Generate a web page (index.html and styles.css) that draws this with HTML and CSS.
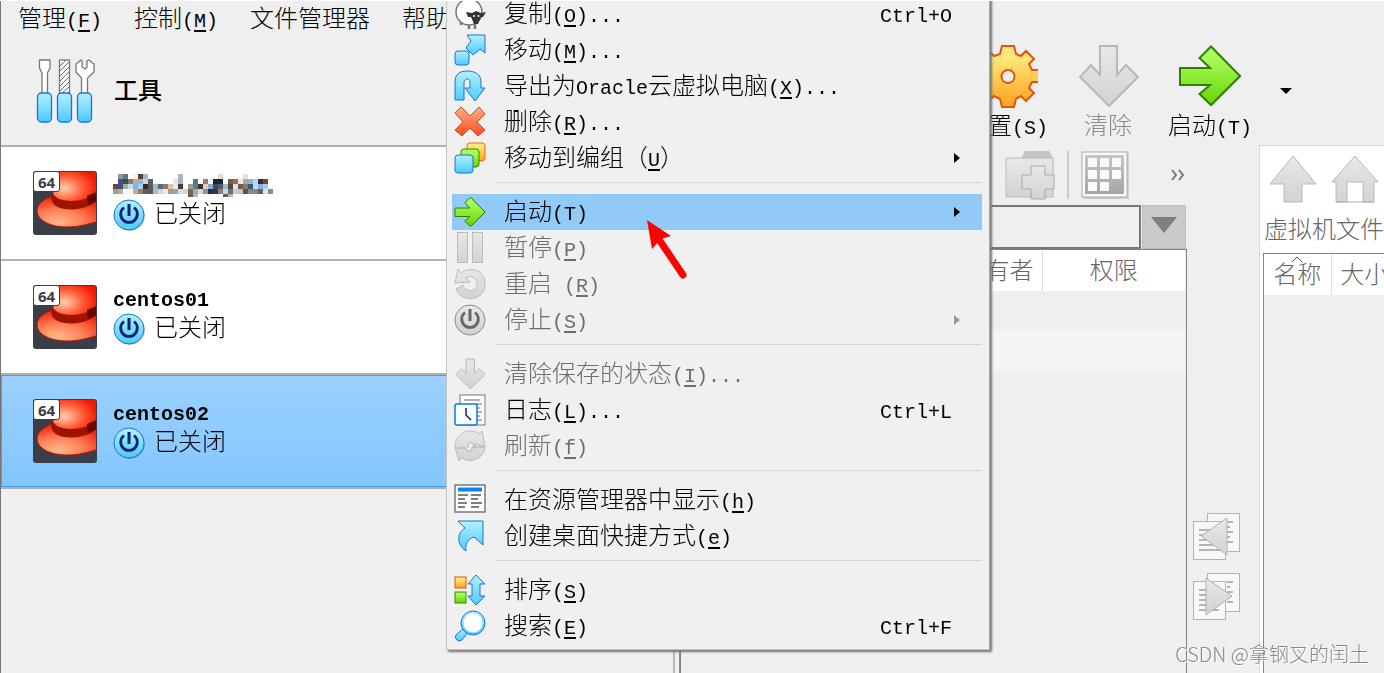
FILE: index.html
```html
<!DOCTYPE html>
<html lang="zh-CN">
<head>
    <meta charset="UTF-8">
    <meta name="viewport" content="width=device-width, initial-scale=1.0">
    <title>VirtualBox</title>
    <link rel="stylesheet" href="styles.css">
</head>
<body>
    <!-- Shared gradients and symbols -->
    <svg class="defs" width="0" height="0" aria-hidden="true">
        <defs>
            <linearGradient id="blue" x1="0" y1="0" x2="0" y2="1"><stop offset="0" stop-color="#b4f0ff"/><stop offset="1" stop-color="#4ccaff"/></linearGradient>
            <linearGradient id="green" x1="0" y1="0" x2="0" y2="1"><stop offset="0.2" stop-color="#a8fb5a"/><stop offset="1" stop-color="#66d400"/></linearGradient>
            <linearGradient id="orange" x1="0" y1="0" x2="0" y2="1"><stop offset="0.2" stop-color="#ffe67a"/><stop offset="1" stop-color="#ffa01e"/></linearGradient>
            <linearGradient id="red" x1="0" y1="0" x2="0" y2="1"><stop offset="0" stop-color="#ffb08a"/><stop offset="1" stop-color="#ff4a20"/></linearGradient>
            <linearGradient id="gray" x1="0" y1="0" x2="0" y2="1"><stop offset="0" stop-color="#e8e8e8"/><stop offset="1" stop-color="#d2d2d2"/></linearGradient>
            <linearGradient id="grid" x1="0" y1="0" x2="0" y2="1"><stop offset="0" stop-color="#c6c6c6"/><stop offset="1" stop-color="#a6a6a6"/></linearGradient>
            <radialGradient id="crown" cx="0.25" cy="0.6" r="0.9"><stop offset="0" stop-color="#ffd0b0"/><stop offset="0.45" stop-color="#ff5c34"/><stop offset="0.8" stop-color="#f01800"/></radialGradient>
            <radialGradient id="brim" cx="0.35" cy="0.85" r="0.8"><stop offset="0" stop-color="#ffb88c"/><stop offset="0.5" stop-color="#ff8058"/><stop offset="1" stop-color="#f02810"/></radialGradient>
            <clipPath id="tile"><rect x="1" y="1" width="62" height="62" rx="2"/></clipPath>
        </defs>
        <symbol id="hat" viewBox="0 0 64 64">
            <rect width="64" height="64" rx="3" fill="#3a3e49"/>
            <g clip-path="url(#tile)">
                <path d="M19 25C10 28 4 34 4 39C4 50 18 56 34 56C46 56 56 53 66 50V26Z" fill="url(#brim)" stroke="#b81400" stroke-width="1"/>
                <path d="M27 -1C26 10 23 16 20 23C24 32 48 32 66 22V-1Z" fill="url(#crown)"/>
                <path d="M19 21C22 28 30 30 39 30C50 30 58 26 66 20V29C56 36 48 38.500 38 38.500C27 38.500 19 35 18 27Z" fill="#9e1400"/>
                <path d="M54 25L66 20V29L55 34Z" fill="#650600"/>
            </g>
        </symbol>
        <symbol id="power" viewBox="0 0 32 32">
            <circle cx="17" cy="17" r="15" fill="#0003"/>
            <circle cx="16" cy="16" r="15" fill="url(#blue)" stroke="#1a72d0" stroke-width="1"/>
            <path d="M11 8.500A8.300 8.300 0 1 0 21 8.500" fill="none" stroke="#04256e" stroke-width="2.800"/>
            <path d="M16 5V17" stroke="#04256e" stroke-width="3"/>
        </symbol>
        <symbol id="arrow-right" viewBox="0 0 64 64">
            <path d="M3 25H32L22 14L34 2.500L64 33L34 62L22 50L32 42H3Z" fill="#0002"/>
            <path d="M2 24H32L21.500 14L33 2.500L62 32L33 61L21.500 50L32 41H2Z" fill="url(#green)" stroke="#2f8000" stroke-width="2"/>
        </symbol>
        <symbol id="arrow-down" viewBox="0 0 64 64">
            <path d="M24 2H41V31L50 21L62 33L33 62L4 33L15 21L24 31Z" fill="url(#gray)" stroke="#b8b8b8" stroke-width="2"/>
        </symbol>
    </svg>

    <nav class="menubar">
        <button type="button">管理<span class="en">(<u>F</u>)</span></button>
        <button type="button">控制<span class="en">(<u>M</u>)</span></button>
        <button type="button">文件管理器</button>
        <button type="button">帮助</button>
    </nav>

    <div class="window">
        <aside class="machines">
            <div class="tools-row">
                <svg width="64" height="68" viewBox="0 0 64 68">
                    <g fill="#fff" stroke="#777" stroke-width="1.300">
                        <path d="M6.500 2H17V10L14.500 15V36H9V15L6.500 10Z"/>
                        <rect x="26.500" y="2" width="10" height="34"/>
                        <path d="M48 2L43 6V14L48.500 20V36H54.500V20L61 14V6L56 2L54 3V9L52 11L49 9V3Z"/>
                    </g>
                    <path d="M27 8L33 2M27 13L36 4M27 18L36 9M27 23L36 14M27 28L36 19M27 33L36 24M28 36L36 29M33 36L36 34" stroke="#666" stroke-width="1"/>
                    <g fill="url(#blue)" stroke="#1a72d0" stroke-width="1.300">
                        <rect x="4.500" y="35" width="14" height="29" rx="4"/>
                        <rect x="24.500" y="35" width="14" height="29" rx="4"/>
                        <rect x="44.500" y="35" width="14" height="29" rx="4"/>
                    </g>
                </svg>
                <strong>工具</strong>
            </div>
            <ul class="machine-list">
                <li class="machine">
                    <div class="os"><svg width="64" height="64"><use href="#hat"/></svg><span class="bits">64</span></div>
                    <div class="info">
                        <canvas id="hiddenName" width="160" height="26"></canvas>
                        <div class="state"><svg width="32" height="32"><use href="#power"/></svg><span>已关闭</span></div>
                    </div>
                </li>
                <li class="machine">
                    <div class="os"><svg width="64" height="64"><use href="#hat"/></svg><span class="bits">64</span></div>
                    <div class="info">
                        <div class="name en">centos01</div>
                        <div class="state"><svg width="32" height="32"><use href="#power"/></svg><span>已关闭</span></div>
                    </div>
                </li>
                <li class="machine selected">
                    <div class="os"><svg width="64" height="64"><use href="#hat"/></svg><span class="bits">64</span></div>
                    <div class="info">
                        <div class="name en">centos02</div>
                        <div class="state"><svg width="32" height="32"><use href="#power"/></svg><span>已关闭</span></div>
                    </div>
                </li>
            </ul>
        </aside>

        <main class="detail">
            <div class="toolbar">
                <button type="button" class="tool">
                    <svg width="64" height="64" viewBox="0 0 64 64">
                        <path fill-rule="evenodd" d="M28 2H40L42 10L47 12L52 7L60 15L55 20L58 26H65V38H58L55 44L60 49L52 57L47 52L42 55L40 63H28L26 55L20 52L15 57L8 49L13 44L10 38H3V26H10L13 20L8 15L15 7L20 12L26 10ZM34 26A6.500 6.500 0 1 0 34 39A6.500 6.500 0 1 0 34 26Z" fill="url(#orange)" stroke="#e0560c" stroke-width="2"/>
                    </svg>
                    <span>设置<span class="en">(S)</span></span>
                </button>
                <button type="button" class="tool" disabled>
                    <svg width="64" height="64"><use href="#arrow-down"/></svg>
                    <span>清除</span>
                </button>
                <button type="button" class="tool">
                    <svg width="64" height="64"><use href="#arrow-right"/></svg>
                    <span>启动<span class="en">(T)</span></span>
                </button>
                <button type="button" class="more" aria-label="more">
                    <svg width="12" height="6" viewBox="0 0 12 6"><path d="M0 0H12L6 6Z"/></svg>
                </button>
            </div>

            <div class="files">
                <section class="host">
                    <div class="file-tools">
                        <svg width="50" height="52" viewBox="0 0 50 52">
                            <path d="M17 10L21 2H45L49 10V48H2V10Z" fill="#0001"/>
                            <path d="M16 10L20 2H44L48 10Z" fill="#c4c4c4"/>
                            <rect x="1" y="9" width="47" height="39" fill="url(#gray)" stroke="#bbb"/>
                            <path d="M26 17H40V26H49V40H40V50H26V40H17V26H26Z" fill="url(#gray)" stroke="#aaa"/>
                        </svg>
                        <span class="divider"></span>
                        <svg width="48" height="48" viewBox="0 0 48 48">
                            <rect x="2" y="2" width="46" height="46" fill="#0002"/>
                            <rect x="1" y="1" width="45" height="45" fill="#f9f9f9" stroke="#aaa"/>
                            <rect x="4" y="4" width="39" height="39" fill="url(#grid)"/>
                            <g fill="#fafafa">
                                <rect x="7" y="7" width="9" height="9"/><rect x="19" y="7" width="9" height="9"/><rect x="31" y="7" width="9" height="9"/>
                                <rect x="7" y="19" width="9" height="9"/><rect x="19" y="19" width="9" height="9"/><rect x="31" y="19" width="9" height="9"/>
                                <rect x="7" y="31" width="9" height="9"/><rect x="19" y="31" width="9" height="9"/>
                            </g>
                        </svg>
                        <button type="button" class="expand" aria-label="expand">
                            <svg width="14" height="12" viewBox="0 0 14 12"><path d="M1 1L5 6L1 11M8 1L12 6L8 11" fill="none" stroke="#777" stroke-width="2"/></svg>
                        </button>
                    </div>
                    <div class="path">
                        <input type="text" aria-label="path" disabled>
                        <button type="button" aria-label="history" disabled>
                            <svg width="26" height="16" viewBox="0 0 26 16"><path d="M0 0H26L13 16Z" fill="#7f7f7f"/></svg>
                        </button>
                    </div>
                    <div class="list">
                        <table>
                            <thead><tr><th class="owner">有者</th><th>权限</th></tr></thead>
                            <tbody>
                                <tr><td></td><td></td></tr>
                                <tr class="alt"><td></td><td></td></tr>
                            </tbody>
                        </table>
                    </div>
                </section>

                <div class="transfer">
                    <button type="button" aria-label="to host" disabled>
                        <svg width="48" height="48" viewBox="0 0 48 48">
                            <g fill="#f8f8f8" stroke="#b4b4b4"><rect x="14.500" y="0.500" width="32" height="38"/><rect x="0.500" y="8.500" width="32" height="38"/></g>
                            <path d="M6 17H30M6 22H30M6 27H30M6 32H30M6 37H30M34 9H40M34 14H37M34 19H40M34 24H37M34 29H40" stroke="#b4b4b4" stroke-width="2"/>
                            <path d="M34 5V42L8 23Z" fill="url(#gray)" stroke="#b0b0b0"/>
                        </svg>
                    </button>
                    <button type="button" aria-label="to guest" disabled>
                        <svg width="48" height="48" viewBox="0 0 48 48">
                            <g fill="#f8f8f8" stroke="#b4b4b4"><rect x="14.500" y="0.500" width="32" height="38"/><rect x="0.500" y="8.500" width="32" height="38"/></g>
                            <path d="M6 17H26M6 22H26M6 27H26M6 32H26M6 37H26M34 9H40M34 14H37M34 19H40M34 24H37M34 29H40" stroke="#b4b4b4" stroke-width="2"/>
                            <path d="M13 5V42L39 23Z" fill="url(#gray)" stroke="#b0b0b0"/>
                        </svg>
                    </button>
                </div>

                <section class="guest">
                    <div class="guest-tools">
                        <svg width="48" height="50" viewBox="0 0 48 50"><path d="M24 1L47 29H33V47H15V29H1Z" fill="url(#gray)" stroke="#b8b8b8"/></svg>
                        <svg width="48" height="50" viewBox="0 0 48 50"><path d="M24 1L47 27H43V47H32V27H16V47H5V27H1Z" fill="url(#gray)" stroke="#b8b8b8"/><path d="M5 47H43" stroke="#b0b0b0"/></svg>
                    </div>
                    <h2>虚拟机文件</h2>
                    <div class="guest-list">
                        <table>
                            <thead><tr>
                                <th class="sorted">名称<svg width="12" height="6" viewBox="0 0 12 6"><path d="M1 6L6 1L11 6" fill="none" stroke="#555"/></svg></th>
                                <th>大小</th>
                            </tr></thead>
                        </table>
                    </div>
                </section>
            </div>
        </main>
    </div>

    <!-- Machine context menu -->
    <div class="context-menu">
        <button type="button" class="item">
            <svg width="32" height="32" viewBox="0 0 32 32">
                <path d="M7 22V27M15 25V31M21 25V31" stroke="#777" stroke-width="2.500"/>
                <circle cx="15" cy="14" r="13" fill="#fff" stroke="#777" stroke-width="1.500"/>
                <path d="M12 14L18 15L22 13L27 15L32 14L29 19H27L24 26H20L17 19H14Z" fill="#333"/>
                <circle cx="20" cy="18" r="1" fill="#fff"/><circle cx="24.500" cy="18" r="1" fill="#fff"/>
            </svg>
            <span>复制<span class="en">(<u>O</u>)...</span></span>
            <kbd class="en">Ctrl+O</kbd>
        </button>
        <button type="button" class="item">
            <svg width="32" height="32" viewBox="0 0 32 32">
                <g fill="url(#blue)" stroke="#1a72d0"><path d="M13 1H31V19L26 15L19 21L12 14L17 7Z"/><rect x="1" y="17" width="14" height="14" rx="3"/></g>
            </svg>
            <span>移动<span class="en">(<u>M</u>)...</span></span>
        </button>
        <button type="button" class="item">
            <svg width="32" height="32" viewBox="0 0 32 32">
                <path d="M1 30V12C1 4 6 1 13 1C22 1 27 5 27 12V18H31L21 31L11 18H16V12C16 8 11 8 10 12V30Z" fill="url(#blue)" stroke="#1a72d0"/>
            </svg>
            <span>导出为<span class="en">Oracle</span>云虚拟电脑<span class="en">(<u>X</u>)...</span></span>
        </button>
        <button type="button" class="item">
            <svg width="32" height="32" viewBox="0 0 32 32">
                <path d="M7 1L16 10L25 1L31 8L23 16L31 24L24 30L16 22L8 30L1 24L9 16L1 7Z" fill="url(#red)" stroke="#d04818"/>
            </svg>
            <span>删除<span class="en">(<u>R</u>)...</span></span>
        </button>
        <button type="button" class="item">
            <svg width="32" height="32" viewBox="0 0 32 32">
                <rect x="13" y="1" width="18" height="18" rx="3" fill="url(#orange)" stroke="#e8701c"/>
                <rect x="7" y="7" width="18" height="18" rx="3" fill="url(#green)" stroke="#2f8c00"/>
                <rect x="1" y="13" width="18" height="18" rx="3" fill="url(#blue)" stroke="#1a72d0"/>
            </svg>
            <span>移动到编组（<u class="en">U</u>）</span>
            <svg class="submenu" width="6" height="10" viewBox="0 0 6 10"><path d="M0 0L6 5L0 10Z"/></svg>
        </button>
        <hr>
        <button type="button" class="item active">
            <svg width="32" height="32"><use href="#arrow-right"/></svg>
            <span>启动<span class="en">(T)</span></span>
            <svg class="submenu" width="6" height="10" viewBox="0 0 6 10"><path d="M0 0L6 5L0 10Z"/></svg>
        </button>
        <button type="button" class="item" disabled>
            <svg width="32" height="32" viewBox="0 0 32 32">
                <g fill="url(#gray)" stroke="#bbb"><rect x="3.500" y="0.500" width="10" height="30"/><rect x="18.500" y="0.500" width="10" height="30"/></g>
            </svg>
            <span>暂停<span class="en">(<u>P</u>)</span></span>
        </button>
        <button type="button" class="item" disabled>
            <svg width="32" height="32" viewBox="0 0 32 32">
                <path d="M4 1L7 5C14 -1 31 0 31 16C31 34 7 35 2 21L9 17C11 25 23 24 23 16C23 9 16 7 12 10L16 14L1 15Z" fill="url(#gray)" stroke="#bbb"/>
            </svg>
            <span>重启<span class="en"> (<u>R</u>)</span></span>
        </button>
        <button type="button" class="item" disabled>
            <svg width="32" height="32" viewBox="0 0 32 32">
                <circle cx="16" cy="16" r="15" fill="url(#gray)" stroke="#888"/>
                <path d="M11 8.500A8.300 8.300 0 1 0 21 8.500" fill="none" stroke="#666" stroke-width="2.800"/>
                <path d="M16 5V17" stroke="#666" stroke-width="3"/>
            </svg>
            <span>停止<span class="en">(<u>S</u>)</span></span>
            <svg class="submenu" width="6" height="10" viewBox="0 0 6 10"><path d="M0 0L6 5L0 10Z"/></svg>
        </button>
        <hr>
        <button type="button" class="item" disabled>
            <svg width="32" height="32"><use href="#arrow-down"/></svg>
            <span>清除保存的状态<span class="en">(<u>I</u>)...</span></span>
        </button>
        <button type="button" class="item">
            <svg width="32" height="32" viewBox="0 0 32 32">
                <rect x="6" y="1" width="25" height="30" fill="#fff" stroke="#777"/>
                <path d="M10 6H26M22 10H28M22 14H26M22 18H28M22 22H26M22 26H28" stroke="#666"/>
                <rect x="1" y="10" width="22" height="21" rx="2" fill="#fff" stroke="#0a7ae0" stroke-width="1.500"/>
                <path d="M12 14V21L17 26" fill="none" stroke="#04256e" stroke-width="1.500"/>
            </svg>
            <span>日志<span class="en">(<u>L</u>)...</span></span>
            <kbd class="en">Ctrl+L</kbd>
        </button>
        <button type="button" class="item" disabled>
            <svg width="32" height="32" viewBox="0 0 32 32">
                <path d="M1 17C1 2 17 -3 25 4L28 1L31 16C31 29 16 34 8 28L5 31Z" fill="url(#gray)" stroke="#bbb"/>
                <path d="M1 18H12C12 22 16 21 18 20V17H21V14L31 17H20C20 12 16 12 14 14V18" fill="#eee" stroke="#b0b0b0"/>
            </svg>
            <span>刷新<span class="en">(<u>f</u>)</span></span>
        </button>
        <hr>
        <button type="button" class="item">
            <svg width="32" height="32" viewBox="0 0 32 32">
                <rect x="1" y="1" width="30" height="27" fill="#fff" stroke="#777" stroke-width="1.500"/>
                <path d="M4 5.500H28" stroke="#0a84f0" stroke-width="4"/>
                <path d="M4 11H14M17 11H27M4 15H11M17 15H24M4 19H13M17 19H28M4 23H11M17 23H25" stroke="#555" stroke-width="1.500"/>
            </svg>
            <span>在资源管理器中显示<span class="en">(<u>h</u>)</span></span>
        </button>
        <button type="button" class="item">
            <svg width="32" height="32" viewBox="0 0 32 32">
                <path d="M4 1H29V25L20 17C13 19 11 25 12 31C3 25 2 14 11 8Z" fill="url(#blue)" stroke="#1a72d0"/>
            </svg>
            <span>创建桌面快捷方式<span class="en">(<u>e</u>)</span></span>
        </button>
        <hr>
        <button type="button" class="item">
            <svg width="32" height="32" viewBox="0 0 32 32">
                <rect x="1" y="3" width="11" height="11" fill="url(#orange)" stroke="#e0560c"/>
                <rect x="1" y="18" width="11" height="11" fill="url(#green)" stroke="#2f8c00"/>
                <path d="M22 1L31 10H26V22H31L22 31L14 22H18V10H14Z" fill="url(#blue)" stroke="#1a72d0"/>
            </svg>
            <span>排序<span class="en">(<u>S</u>)</span></span>
        </button>
        <button type="button" class="item">
            <svg width="32" height="32" viewBox="0 0 32 32">
                <path d="M10 18L2 25Q0 28 3 30Q5 32 8 30L14 22Z" fill="url(#blue)" stroke="#1a72d0"/>
                <circle cx="19" cy="13" r="12" fill="url(#blue)" stroke="#1a72d0"/>
                <circle cx="19" cy="13" r="9.500" fill="#fff"/>
            </svg>
            <span>搜索<span class="en">(<u>E</u>)</span></span>
            <kbd class="en">Ctrl+F</kbd>
        </button>
    </div>

    <svg class="pointer" width="42" height="62" viewBox="0 0 42 62">
        <path d="M11 18L36 55" stroke="#f00" stroke-width="7" stroke-linecap="round"/>
        <path d="M0 0L24 16L14 19L5 29Z" fill="#f00"/>
    </svg>
    <div class="watermark">CSDN @拿钢叉的闰土</div>

    <script>
        // Censored machine name, one 5px block per colour
        const blocks = [
            [0, '- 8e99a5 5d7b84 - fdf0e2 5a3d2e a8b4c0 - - - - - - a8b8c8 - - - - - - - f0d8c0 - - - - e0e2e6'],
            [5, '- 3a5580 4a4a42 8a7a74 c9a78e 8ab4dc b8d4f0 5c5c60 - - - - e8e4e0 a8b0c8 - - 5b7488 - 8a847c fff4ea 0c2a4c 0c2a4c - 7a5a40 9a6e50 f0e8dc b8a890 8cb4dc b8d4f0 2c2c44 704828'],
            [10, '70482c 3a5580 a0b0a8 c8dcf0 88b0dc a8ccec 402420 5c5c60 a8b8b8 4a6c90 a07850 d0c8bc f0e8e0 583440 - 98a090 5a7898 343438 e8d0b8 88a8d0 404858 5c5c60 a0b8d0 584838 e8e0d8 70584c 8a7a74 385480 c0d8e8 88b0d8 a8ccec'],
            [15, '90a0b0 c8a888 ecfaff ecfaff c8ac90 8a8278 605c60 58585c b8b8b0 d0d4e0 f0e8dc b09880 98a4b4 d8dce4 f0d0b0 706860 a8a8a8 d8d8d8 8094a8 242c50 243860 88807c c4d8dc 687088 b0d0f0 d8c0a8 5c5450 908880 8c8480 606858 dce8e8 8090a0'],
            [20, '- - - - - - - - - - - - - - - 705848 b0b8b8 - - - - - 705848 b0b8b0']
        ];
        const ctx = document.getElementById('hiddenName').getContext('2d');
        blocks.forEach(([y, row]) => {
            row.split(' ').forEach((color, i) => {
                if (color === '-') return;
                ctx.fillStyle = '#' + color;
                ctx.fillRect(i * 5, y + 1, 5, y === 20 ? 3 : 5);
            });
        });
    </script>
</body>
</html>
```

FILE: styles.css
```css
* {
    box-sizing: border-box;
}

body {
    display: flex;
    flex-direction: column;
    position: relative;
    height: 100vh;
    margin: 0;
    overflow: hidden;
    background-color: #efefef;
    border-top: 1px solid #fff;
    font-family: "Noto Sans CJK SC", sans-serif;
    font-size: 24px;
    font-weight: 300;
    line-height: 32px;
    color: #000;
}

button {
    padding: 0;
    border: none;
    background: none;
    font: inherit;
    color: inherit;
    white-space: nowrap;
}

svg,
canvas {
    display: block;
    flex: none;
}

.defs {
    position: absolute;
}

.en {
    font-family: "Liberation Mono", monospace;
    font-size: 20px;
    white-space: pre;
}

u {
    text-underline-offset: 3px;
}

.menubar {
    display: flex;
    align-items: flex-start;
    gap: 32px;
    height: 37px;
    padding-left: 17px;
    border-left: 1px solid #777;
}

.window {
    display: flex;
    flex: 1;
    min-height: 0;
}

/* Machine list */
.machines {
    width: 680px;
    flex: none;
    border-left: 1px solid #777;
    border-right: 1px solid #8a8a98;
    box-shadow: inset -4px 0 #efefef, inset -6px 0 #b8b8b8;
}

.tools-row {
    display: flex;
    align-items: center;
    gap: 17px;
    height: 109px;
    padding-left: 32px;
    margin-right: 6px;
    border-bottom: 2px solid #b0b0b0;
}

.tools-row strong {
    padding-bottom: 6px;
    font-weight: 500;
}

.machine-list {
    margin: 0 6px 0 0;
    padding: 0;
    list-style: none;
}

.machine {
    display: flex;
    gap: 16px;
    height: 114px;
    padding: 24px 32px;
    background-color: #fff;
    border-bottom: 2px solid #b0b0b0;
}

.machine.selected {
    background: linear-gradient(#9ad1ff, #84c6ff);
    box-shadow: inset 0 0 0 1px #3f9fee;
}

.os {
    position: relative;
}

.bits {
    position: absolute;
    top: 0;
    left: 0;
    width: 27px;
    height: 21px;
    border: 1px solid #3a3e49;
    border-radius: 3px;
    background-color: #fff;
    font: bold 15px/20px "Noto Sans", sans-serif;
    text-align: center;
    color: #3a3e49;
}

.info {
    padding-top: 2px;
}

.name {
    line-height: 28px;
    height: 26px;
    font-weight: bold;
}

.state {
    display: flex;
    gap: 9px;
    height: 32px;
    line-height: 26px;
}

/* Right side */
.detail {
    display: flex;
    flex: 1;
    flex-direction: column;
    min-width: 0;
}

.toolbar {
    display: flex;
    justify-content: flex-end;
    align-items: flex-start;
    gap: 28px;
    height: 107px;
    padding: 6px 92px 0 0;
}

.tool {
    display: flex;
    flex-direction: column;
    align-items: center;
}

.tool:disabled {
    color: #8a8a8a;
}

.more {
    padding-top: 44px;
}

.files {
    display: flex;
    flex: 1;
    min-height: 0;
}

.host {
    display: flex;
    flex: 1;
    flex-direction: column;
    min-width: 0;
}

.file-tools {
    display: flex;
    justify-content: flex-end;
    align-items: center;
    gap: 12px;
    height: 60px;
    padding-right: 2px;
}

.divider {
    width: 2px;
    height: 48px;
    background-color: #ccc;
}

.expand {
    margin-left: 30px;
}

.path {
    display: flex;
    gap: 1px;
    height: 44px;
    padding-right: 1px;
}

.path input {
    flex: 1;
    min-width: 0;
    border: 2px solid #787878;
    background-color: #efefef;
    font: inherit;
}

.path button {
    display: flex;
    justify-content: center;
    width: 44px;
    padding-top: 11px;
    border: 1px solid #bdbdbd;
    background-color: #cacaca;
}

.list {
    flex: 1;
    padding-right: 1px;
    border: 1px solid #7d8190;
    border-bottom: none;
}

table {
    width: 100%;
    border-collapse: collapse;
}

th {
    height: 41px;
    padding: 0 0 3px;
    background-color: #fff;
    font-weight: 300;
    color: #666;
}

th + th {
    width: 143px;
    border-left: 1px solid #ddd;
}

.owner {
    padding-right: 8px;
    text-align: right;
}

td {
    height: 40px;
    padding: 0;
}

.alt {
    background-color: #f5f5f5;
}

.transfer {
    display: flex;
    flex-direction: column;
    align-items: center;
    justify-content: flex-end;
    gap: 12px;
    width: 72px;
    padding: 0 12px 52px 0;
}

.guest {
    display: flex;
    flex-direction: column;
    width: 125px;
    overflow: hidden;
    background-color: #fff;
    border-top: 1px solid #d8d8d8;
    border-left: 1px solid #d8d8d8;
}

.guest-tools {
    display: flex;
    gap: 14px;
    padding: 9px 0 0 9px;
}

.guest h2 {
    margin: 7px 0 9px 4px;
    font-size: 24px;
    font-weight: 300;
    color: #666;
    white-space: nowrap;
}

.guest-list {
    flex: 1;
    margin-left: 3px;
    background-color: #efefef;
    border-top: 1px solid #7d8190;
    border-left: 1px solid #7d8190;
}

.guest-list table {
    width: 133px;
}

.guest-list th + th {
    width: 66px;
}

.sorted {
    position: relative;
}

.sorted svg {
    position: absolute;
    top: 2px;
    left: 27px;
}

/* Context menu */
.context-menu {
    position: absolute;
    top: -11px;
    left: 446px;
    width: 544px;
    padding: 5px 7px 5px 5px;
    border: 1px solid #c4c4c4;
    border-right-color: #aaa;
    background-color: #f0f0f0;
    box-shadow: 2px 2px 2px #777;
}

.item {
    display: flex;
    align-items: center;
    gap: 18px;
    width: 100%;
    height: 36px;
    padding: 0 30px 0 2px;
    text-align: left;
}

.item kbd {
    margin-left: auto;
    padding-top: 5px;
}

.item.active {
    background-color: #91c9f7;
}

.item:disabled {
    color: #6d6d6d;
}

.item .submenu {
    margin-left: auto;
    margin-right: -8px;
}

.item:disabled .submenu {
    fill: #999;
}

.context-menu hr {
    height: 18px;
    margin: 0 0 0 44px;
    border: none;
    background: linear-gradient(#d4d4d4, #d4d4d4) 0 6px / 100% 1px no-repeat;
}

.pointer {
    position: absolute;
    top: 219px;
    left: 647px;
}

.watermark {
    position: absolute;
    right: 15px;
    bottom: 3px;
    font-size: 20px;
    color: #888;
    text-shadow: 1px 1px #fff;
}
```
